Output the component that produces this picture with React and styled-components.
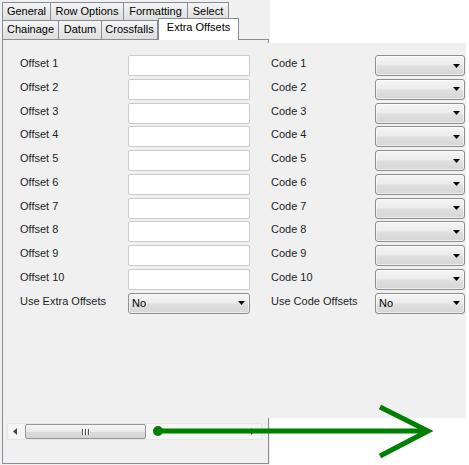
import React from 'react';
import styled, { createGlobalStyle } from 'styled-components';

const GlobalStyle = createGlobalStyle`
  html, body {
    margin: 0;
    padding: 0;
    background: #fff;
  }
  body {
    font-family: "Liberation Sans", Arial, sans-serif;
    font-size: 11px;
    color: #1e1e1e;
  }
`;

const Page = styled.div`
  position: relative;
  width: 469px;
  height: 465px;
  overflow: hidden;
  background: #fff;
`;

const TabControl = styled.div`
  width: 270px;
  height: 465px;
  background: #f0f0f0;
  display: flex;
  flex-direction: column;
`;

const TabStrip = styled.div`
  display: flex;
  flex-direction: column;
  padding: 2px 0 0 2px;
`;

const TabRow = styled.div`
  display: flex;
  align-items: flex-end;
  height: ${p => p.$h}px;
`;

const Tab = styled.div`
  box-sizing: border-box;
  flex: none;
  width: ${p => p.$w}px;
  height: ${p => (p.$active ? '22px' : '100%')};
  margin-left: ${p => (p.$first || p.$active ? 0 : -1)}px;
  margin-bottom: ${p => (p.$active ? -1 : 0)}px;
  position: ${p => (p.$active ? 'relative' : 'static')};
  z-index: ${p => (p.$active ? 1 : 'auto')};
  border: 1px solid #898c95;
  border-bottom: none;
  background: ${p => (p.$active ? '#fff' : 'linear-gradient(#f4f4f4, #e9e9e9 50%, #dedede)')};
  color: #000;
  text-align: center;
  line-height: 16px;
  white-space: nowrap;
`;

const Panel = styled.div`
  box-sizing: border-box;
  width: 267px;
  height: 425px;
  margin-left: 2px;
  border: 1px solid #898c95;
  display: flex;
  flex-direction: column;
`;

const Content = styled.div`
  box-sizing: border-box;
  flex: none;
  width: 463px;
  height: 375px;
  margin-top: 3px;
  padding: 12px 0 0 17px;
  background: #f0f0f0;
  display: grid;
  grid-template-columns: 108px 122px 125px 91px;
  grid-auto-rows: 23.75px;
  align-content: start;
`;

const Label = styled.div`
  padding: 2px 0 0 ${p => (p.$indent ? 21 : 0)}px;
  line-height: 13px;
  white-space: nowrap;
`;

const TextBox = styled.input`
  box-sizing: border-box;
  width: 122px;
  height: 21px;
  margin: 0;
  padding: 0 3px;
  border: 1px solid #cbcbcb;
  border-radius: 2px;
  background: #fff;
  font: inherit;
  outline: none;
`;

const Dropdown = styled.div`
  box-sizing: border-box;
  width: ${p => p.$w}px;
  height: 21px;
  padding: 0 4px 0 3px;
  border: 1px solid #8f8f8f;
  border-radius: 3px;
  background: linear-gradient(#f5f5f5, #ececec 45%, #dfdfdf 55%, #d6d6d6);
  box-shadow: inset 0 0 0 1px rgba(255, 255, 255, 0.55);
  display: flex;
  align-items: center;
  justify-content: space-between;
  color: #000;
`;

const ScrollBar = styled.div`
  box-sizing: border-box;
  width: 255px;
  height: 17px;
  margin: 5px 0 0 4px;
  background: #f5f5f5;
  border: 1px solid #e6e6e6;
  display: flex;
  align-items: center;
`;

const ScrollButton = styled.div`
  box-sizing: border-box;
  width: 17px;
  height: 15px;
  display: flex;
  align-items: center;
  justify-content: center;
  padding-right: ${p => (p.$end ? 0 : 3)}px;
  margin-left: ${p => (p.$end ? 'auto' : 0)};
`;

const Thumb = styled.div`
  box-sizing: border-box;
  width: 121px;
  height: 15px;
  border: 1px solid #979797;
  border-radius: 2px;
  background: linear-gradient(#f5f5f5, #e9e9e9 50%, #dcdcdc 50%, #d3d3d3);
  display: flex;
  align-items: center;
  justify-content: center;
  gap: 2px;
`;

const Grip = styled.span`
  width: 1px;
  height: 6px;
  background: #555;
  box-shadow: 1px 0 0 #fff;
`;

const Overlay = styled.svg`
  position: absolute;
  left: 0;
  top: 0;
  pointer-events: none;
`;

const topTabs = [
  { name: 'General', w: 49 },
  { name: 'Row Options', w: 74 },
  { name: 'Formatting', w: 65 },
  { name: 'Select', w: 42 },
];

const bottomTabs = [
  { name: 'Chainage', w: 57 },
  { name: 'Datum', w: 44 },
  { name: 'Crossfalls', w: 57 },
  { name: 'Extra Offsets', w: 81, active: true },
];

const Caret = () => (
  <svg width="7" height="4" viewBox="0 0 7 4">
    <polygon points="0,0 7,0 3.5,4" fill="#000" />
  </svg>
);

const rows = Array.from({ length: 10 }, (_, i) => i + 1);

const App = () => {
  return (
    <Page>
      <GlobalStyle />
      <TabControl>
        <TabStrip>
          <TabRow $h={18}>
            {topTabs.map((t, i) => (
              <Tab key={t.name} $w={t.w} $first={i === 0}>{t.name}</Tab>
            ))}
          </TabRow>
          <TabRow $h={19}>
            {bottomTabs.map((t, i) => (
              <Tab key={t.name} $w={t.w} $first={i === 0} $active={t.active}>{t.name}</Tab>
            ))}
          </TabRow>
        </TabStrip>

        <Panel>
          <Content>
            {rows.map(n => (
              <React.Fragment key={n}>
                <Label>Offset {n}</Label>
                <TextBox readOnly />
                <Label $indent>Code {n}</Label>
                <Dropdown $w={90}><span /><Caret /></Dropdown>
              </React.Fragment>
            ))}
            <Label>Use Extra Offsets</Label>
            <Dropdown $w={122}><span>No</span><Caret /></Dropdown>
            <Label $indent>Use Code Offsets</Label>
            <Dropdown $w={90}><span>No</span><Caret /></Dropdown>
          </Content>

          <ScrollBar>
            <ScrollButton>
              <svg width="4" height="7" viewBox="0 0 4 7">
                <polygon points="4,0 4,7 0,3.5" fill="#444" />
              </svg>
            </ScrollButton>
            <Thumb>
              <Grip />
              <Grip />
              <Grip />
            </Thumb>
            <ScrollButton $end>
              <svg width="4" height="7" viewBox="0 0 4 7">
                <polygon points="0,0 0,7 4,3.5" fill="#444" />
              </svg>
            </ScrollButton>
          </ScrollBar>
        </Panel>
      </TabControl>

      {/* green annotation arrow drawn over the scrollbar */}
      <Overlay width="469" height="465" viewBox="0 0 469 465">
        <line x1="158" y1="431" x2="426" y2="431" stroke="#008000" strokeWidth="5" />
        <circle cx="158" cy="431" r="5" fill="#008000" />
        <polyline
          points="380,407 428,431 380,456"
          fill="none"
          stroke="#008000"
          strokeWidth="5"
        />
      </Overlay>
    </Page>
  );
};

export default App;
